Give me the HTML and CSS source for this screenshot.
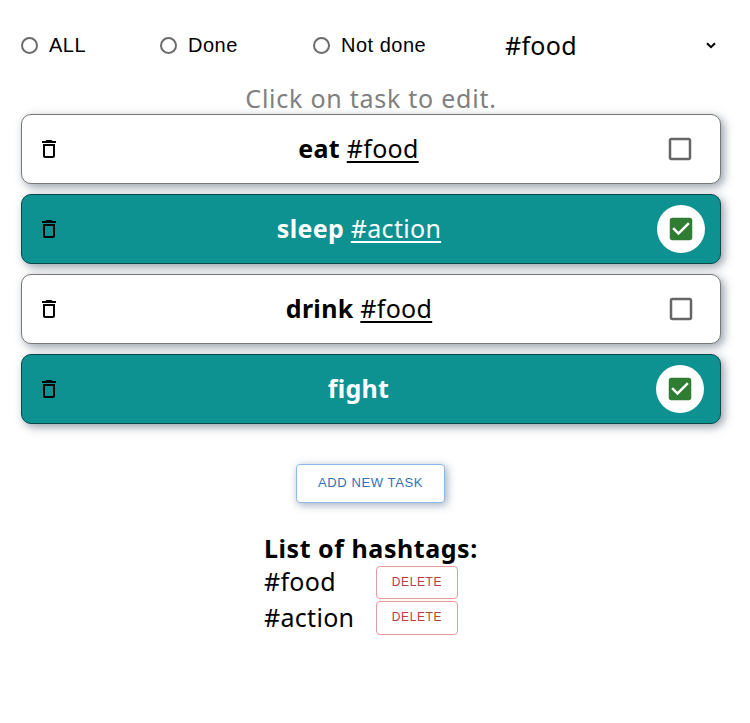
FILE: index.html
```html
<!DOCTYPE html>
<html lang="en">
<head>
<meta charset="utf-8">
<title>Tasks</title>
<link rel="stylesheet" href="styles.css">
</head>
<body>
<svg width="0" height="0" class="sprite" aria-hidden="true">
  <symbol id="trash" viewBox="0 0 24 24"><path d="M6 19c0 1.100.9 2 2 2h8c1.100 0 2-.9 2-2V7H6v12zM8 9h8v10H8V9zm7.500-5l-1-1h-5l-1 1H5v2h14V4z"/></symbol>
  <symbol id="box" viewBox="0 0 24 24"><path d="M19 5v14H5V5h14m0-2H5c-1.100 0-2 .9-2 2v14c0 1.100.9 2 2 2h14c1.100 0 2-.9 2-2V5c0-1.100-.9-2-2-2z"/></symbol>
  <symbol id="checked" viewBox="0 0 24 24"><path d="M19 3H5c-1.110 0-2 .9-2 2v14c0 1.100.89 2 2 2h14c1.110 0 2-.9 2-2V5c0-1.100-.89-2-2-2zm-9 14l-5-5 1.410-1.410L10 14.170l7.590-7.590L19 8l-9 9z"/></symbol>
</svg>
<main class="app">
  <div class="filters">
    <label class="filter all"><span class="radio"></span><span>ALL</span></label>
    <label class="filter done"><span class="radio"></span><span>Done</span></label>
    <label class="filter not-done"><span class="radio"></span><span>Not done</span></label>
    <div class="picker">
      <select class="select"><option>#food</option><option>#action</option></select>
      <svg class="chevron" viewBox="0 0 10 7"><path d="M1 1.200l4 4 4-4"/></svg>
    </div>
  </div>
  <p class="hint">Click on task to edit.</p>
  <ul class="tasks">
    <li class="task"><svg class="trash"><use href="#trash"/></svg><div class="text"><b>eat</b> <u>#food</u></div><span class="check"><svg><use href="#box"/></svg></span></li>
    <li class="task complete shifted"><svg class="trash"><use href="#trash"/></svg><div class="text"><b>sleep</b> <u>#action</u></div><span class="check"><svg><use href="#checked"/></svg></span></li>
    <li class="task shifted"><svg class="trash"><use href="#trash"/></svg><div class="text"><b>drink</b> <u>#food</u></div><span class="check"><svg><use href="#box"/></svg></span></li>
    <li class="task complete"><svg class="trash"><use href="#trash"/></svg><div class="text"><b>fight</b></div><span class="check"><svg><use href="#checked"/></svg></span></li>
  </ul>
  <button class="button add">ADD NEW TASK</button>
  <section class="hashtags">
    <h2 class="title">List of hashtags:</h2>
    <div class="tag"><span>#food</span><button class="button delete">DELETE</button></div>
    <div class="tag second"><span>#action</span><button class="button delete tall">DELETE</button></div>
  </section>
</main>
</body>
</html>
```
FILE: styles.css
```css
* { box-sizing: border-box; }
body {
  margin: 0;
  background: #fff;
  color: #000;
  font: 25px/33px "Noto Sans", sans-serif;
  letter-spacing: 0.3px;
}
.sprite { display: none; }
.app { width: 700px; margin: 0 29px 0 21px; padding-top: 25px; }
.filters {
  display: grid;
  grid-template-columns: 139px 153px 191px 217px;
  align-items: center;
  height: 40px;
}
.filter {
  display: flex;
  align-items: center;
  gap: 11px;
  font: 20px/24px "Liberation Sans", sans-serif;
  letter-spacing: 0.5px;
}
.radio {
  width: 17px;
  height: 17px;
  border: 2px solid #6b6b6b;
  border-radius: 50%;
}
.picker { display: flex; align-items: center; }
.select {
  appearance: none;
  width: 202px;
  height: 40px;
  padding: 0 0 0 1px;
  border: 0;
  background: none;
  color: inherit;
  font: inherit;
  letter-spacing: inherit;
}
.chevron { width: 10px; height: 7px; }
.chevron path { fill: none; stroke: #000; stroke-width: 2; }
.hint {
  height: 49px;
  margin: 0;
  padding-top: 17px;
  color: #808080;
  text-align: center;
  letter-spacing: 0.75px;
}
.tasks { display: grid; gap: 10px; margin: 0; padding: 0; list-style: none; }
.task {
  display: flex;
  align-items: center;
  height: 70px;
  padding: 0 16px;
  border: 1px solid #777;
  border-radius: 10px;
  background: #fff;
  box-shadow: 3px 3px 10px rgba(60, 80, 100, 0.55);
}
.complete { background: #0e9191; border-color: #07494b; color: #fff; }
.trash { width: 24px; height: 24px; margin-left: -1px; fill: #000; }
.text { flex: 1; padding-bottom: 2px; text-align: center; white-space: pre; }
.text u { text-decoration-thickness: 2px; text-underline-offset: 3px; text-decoration-skip-ink: none; }
.check {
  display: grid;
  place-items: center;
  width: 48px;
  height: 48px;
  border-radius: 50%;
  fill: #666;
}
.shifted { padding-right: 15px; }
.check svg { width: 30px; height: 30px; }
.complete .check { background: #fff; fill: #2e7d32; }
.button {
  display: block;
  padding: 0;
  border: 1px solid;
  border-radius: 4px;
  background: #fff;
  font: 13px/20px "Liberation Sans", sans-serif;
}
.add {
  width: 149px;
  height: 39px;
  margin: 40px 0 0 275px;
  padding-bottom: 2px;
  border-color: #8cb8e6;
  color: #3270bb;
  letter-spacing: 0.6px;
  box-shadow: 2px 2px 8px rgba(60, 90, 120, 0.5);
}
.hashtags { margin: 29px 0 0 243px; }
.title { margin: 0 0 1px; font-size: 25px; line-height: 33px; letter-spacing: 0.55px; }
.tag { display: grid; grid-template-columns: 112px 82px; height: 35px; }
.tag span { margin-top: -1px; }
.second span { margin-top: 0; }
.delete {
  width: 82px;
  height: 33px;
  padding-bottom: 2px;
  border-color: #e59a9e;
  color: #b63e42;
  font-size: 12px;
  letter-spacing: 0.6px;
}
.tall { height: 34px; }
```
